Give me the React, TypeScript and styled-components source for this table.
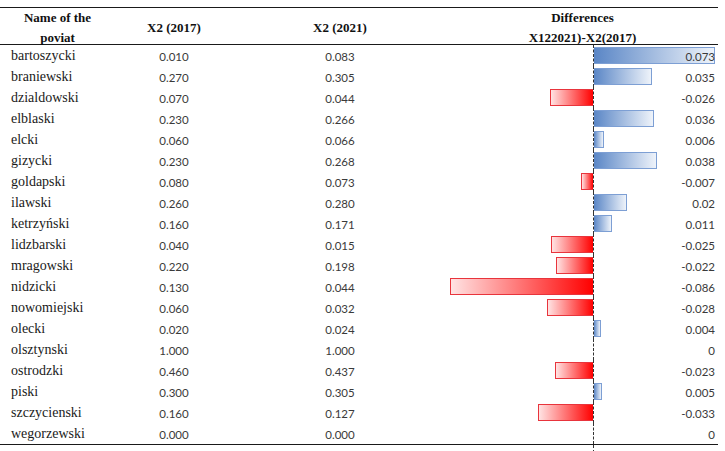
import React from "react";
import styled, { createGlobalStyle } from "styled-components";

const Global = createGlobalStyle`
  html, body { margin: 0; padding: 0; background: #fff; }
  body { font-family: "Liberation Serif", serif; }
`;

const COLS = "115px 118px 214px 271px";
const SCALE = 1660;

const Page = styled.div`
  padding-top: 7px;
  width: 725px;
`;

const Table = styled.div`
  width: 718px;
  border-top: 1px solid #1a1a1a;
  border-bottom: 1px solid #1a1a1a;
`;

const HeadRow = styled.div`
  display: grid;
  grid-template-columns: ${COLS};
  height: 36px;
  align-items: center;
  border-bottom: 1px solid #1a1a1a;
  font-family: "Liberation Serif", serif;
  font-weight: bold;
  font-size: 13px;
  line-height: 20px;
  color: #111;
`;

const HeadCell = styled.div`
  text-align: center;
`;

const Row = styled.div<{ $h?: number }>`
  display: grid;
  grid-template-columns: ${COLS};
  height: ${(p) => p.$h ?? 21}px;
  align-items: stretch;
`;

const NameCell = styled.div`
  padding-left: 11px;
  display: flex;
  align-items: center;
  padding-top: 1px;
  font-family: "Liberation Serif", serif;
  font-size: 14px;
  color: #1a1a1a;
`;

const NumCell = styled.div`
  display: flex;
  align-items: center;
  justify-content: center;
  padding-top: 1px;
  font-family: "Lato", "Liberation Sans", sans-serif;
  font-size: 11.5px;
  color: #3a3a3a;
`;

const ChartCell = styled.div`
  display: grid;
  grid-template-columns: 146px 1fr;
`;

const NegArea = styled.div`
  display: flex;
  justify-content: flex-end;
  align-items: center;
`;

const PosArea = styled.div`
  display: grid;
  align-items: center;
  border-left: 1px dashed #333;
`;

const Bar = styled.div<{ $neg: boolean }>`
  grid-area: 1 / 1;
  box-sizing: border-box;
  height: 17px;
  background: ${(p) =>
    p.$neg
      ? "linear-gradient(to right, #ffe3e3, #ff0000)"
      : "linear-gradient(to right, #5a86c6, #eef3fa)"};
  border: 1px solid ${(p) => (p.$neg ? "#e8343c" : "#7d9fd4")};
  border-right: ${(p) => (p.$neg ? "none" : undefined)};
  border-left: ${(p) => (p.$neg ? undefined : "none")};
`;

const Value = styled.div`
  grid-area: 1 / 1;
  justify-self: end;
  padding-right: 3px;
  padding-top: 1px;
  font-family: "Lato", "Liberation Sans", sans-serif;
  font-size: 11.5px;
  color: #3a3a3a;
  position: relative;
`;

type R = [string, string, string, string];

const rows: R[] = [
  ["bartoszycki", "0.010", "0.083", "0.073"],
  ["braniewski", "0.270", "0.305", "0.035"],
  ["dzialdowski", "0.070", "0.044", "-0.026"],
  ["elblaski", "0.230", "0.266", "0.036"],
  ["elcki", "0.060", "0.066", "0.006"],
  ["gizycki", "0.230", "0.268", "0.038"],
  ["goldapski", "0.080", "0.073", "-0.007"],
  ["ilawski", "0.260", "0.280", "0.02"],
  ["ketrzyński", "0.160", "0.171", "0.011"],
  ["lidzbarski", "0.040", "0.015", "-0.025"],
  ["mragowski", "0.220", "0.198", "-0.022"],
  ["nidzicki", "0.130", "0.044", "-0.086"],
  ["nowomiejski", "0.060", "0.032", "-0.028"],
  ["olecki", "0.020", "0.024", "0.004"],
  ["olsztynski", "1.000", "1.000", "0"],
  ["ostrodzki", "0.460", "0.437", "-0.023"],
  ["piski", "0.300", "0.305", "0.005"],
  ["szczycienski", "0.160", "0.127", "-0.033"],
  ["wegorzewski", "0.000", "0.000", "0"],
];

export default function App() {
  return (
    <Page>
      <Global />
      <Table>
        <HeadRow>
          <HeadCell>
            Name of the
            <br />
            poviat
          </HeadCell>
          <HeadCell>X2 (2017)</HeadCell>
          <HeadCell>X2 (2021)</HeadCell>
          <HeadCell>
            Differences
            <br />
            X122021)-X2(2017)
          </HeadCell>
        </HeadRow>
        {rows.map(([name, a, b, d]) => {
          const v = parseFloat(d);
          const w = Math.round(Math.abs(v) * SCALE);
          return (
            <Row key={name}>
              <NameCell>{name}</NameCell>
              <NumCell>{a}</NumCell>
              <NumCell>{b}</NumCell>
              <ChartCell>
                <NegArea>
                  {v < 0 && <Bar $neg style={{ width: w }} />}
                </NegArea>
                <PosArea>
                  {v > 0 && <Bar $neg={false} style={{ width: w }} />}
                  <Value>{d}</Value>
                </PosArea>
              </ChartCell>
            </Row>
          );
        })}
      </Table>
      <Row $h={8}>
        <div />
        <div />
        <div />
        <ChartCell>
          <NegArea />
          <PosArea />
        </ChartCell>
      </Row>
    </Page>
  );
}
